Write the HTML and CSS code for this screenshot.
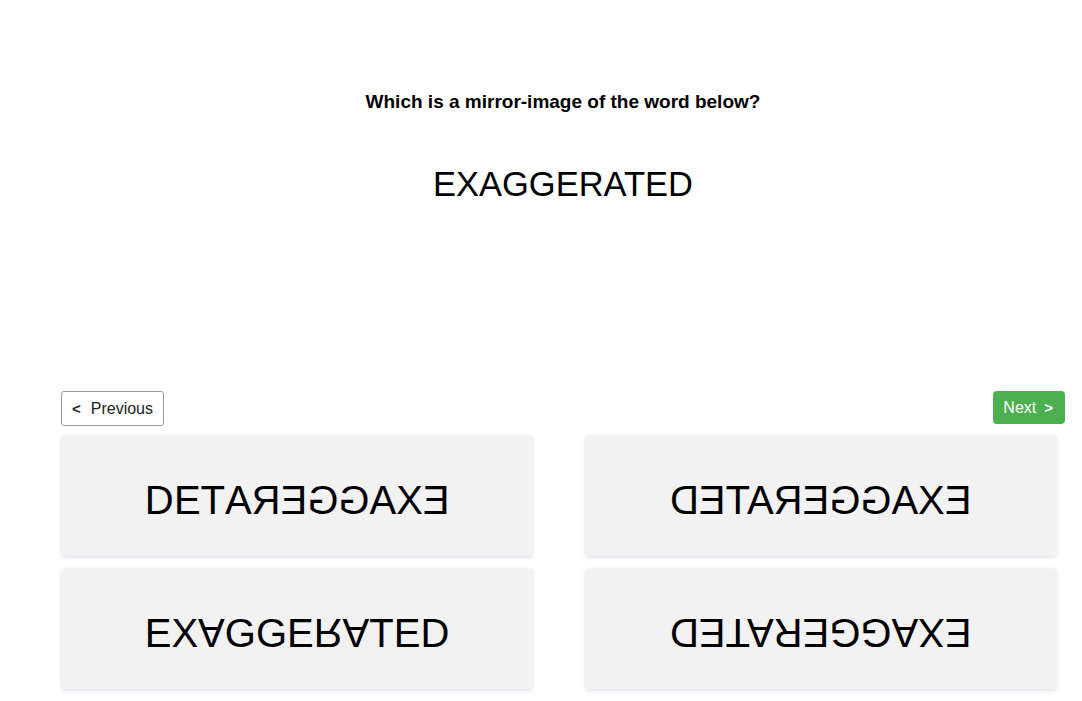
FILE: index.html
```html
<!DOCTYPE html>
<html lang="en">
<head>
<meta charset="utf-8">
<title>Mirror image</title>
<link rel="stylesheet" href="styles.css">
</head>
<body>
<main class="quiz">
  <h1 class="question">Which is a mirror-image of the word below?</h1>
  <div class="word">EXAGGERATED</div>
  <div class="nav">
    <button class="btn btn-prev"><span class="chev">&lt;</span>Previous</button>
    <button class="btn btn-next">Next<span class="chev chev-r">&gt;</span></button>
  </div>
  <div class="options">
    <div class="card">
      <span class="opt flip-x"><span class="l">E</span><span class="l">X</span><span class="l">A</span><span class="l">G</span><span class="l">G</span><span class="l">E</span><span class="l">R</span><span class="l">A</span><span class="l">T</span><span class="l fx">E</span><span class="l fx">D</span></span>
    </div>
    <div class="card">
      <span class="opt flip-x">EXAGGERATED</span>
    </div>
    <div class="card">
      <span class="opt"><span class="l">E</span><span class="l">X</span><span class="l fy">A</span><span class="l">G</span><span class="l">G</span><span class="l">E</span><span class="l fy">R</span><span class="l fy">A</span><span class="l">T</span><span class="l">E</span><span class="l">D</span></span>
    </div>
    <div class="card">
      <span class="opt rot">EXAGGERATED</span>
    </div>
  </div>
</main>
</body>
</html>
```

FILE: styles.css
```css
html, body {
  margin: 0;
  padding: 0;
  background: #ffffff;
}

body {
  font-family: "Liberation Sans", Arial, sans-serif;
  color: #000;
}

.quiz {
  width: 1004px;
  margin-left: 61px;
  padding-top: 91px;
  padding-bottom: 12px;
}

.question {
  margin: 0;
  font-size: 19px;
  font-weight: bold;
  line-height: 22px;
  text-align: center;
}

.word {
  margin-top: 52px;
  font-size: 34.5px;
  line-height: 39px;
  text-align: center;
}

.nav {
  margin-top: 187px;
  display: flex;
  justify-content: space-between;
  align-items: flex-start;
}

.btn {
  font-family: "Liberation Sans", Arial, sans-serif;
  font-size: 16px;
  line-height: 18px;
  cursor: pointer;
  display: inline-flex;
  align-items: center;
}

.btn-prev {
  background: #fff;
  color: #222;
  border: 1px solid #9a9a9a;
  border-radius: 3px;
  height: 35px;
  padding: 0 10px 0 10px;
}

.btn-next {
  background: #4caf50;
  color: #fff;
  border: none;
  border-radius: 4px;
  height: 33px;
  padding: 0 12px 0 10px;
}

.chev {
  font-weight: bold;
  font-size: 15px;
  margin-right: 10px;
}

.chev-r {
  margin-right: 0;
  margin-left: 8px;
}

.options {
  margin-top: 10px;
  display: grid;
  grid-template-columns: 470px 470px;
  column-gap: 54px;
  row-gap: 13px;
  padding-left: 1px;
}

.card {
  background: #f2f2f2;
  height: 120px;
  box-sizing: border-box;
  padding-top: 41px;
  text-align: center;
  box-shadow: 0 1px 4px rgba(40, 40, 110, 0.18);
}

.opt {
  display: inline-block;
  font-size: 40px;
  line-height: 46px;
  white-space: nowrap;
}

.l {
  display: inline-block;
}

.flip-x {
  transform: scaleX(-1);
}

.fx {
  transform: scaleX(-1);
}

.fy {
  transform: scaleY(-1);
}

.rot {
  transform: rotate(180deg);
}
```
